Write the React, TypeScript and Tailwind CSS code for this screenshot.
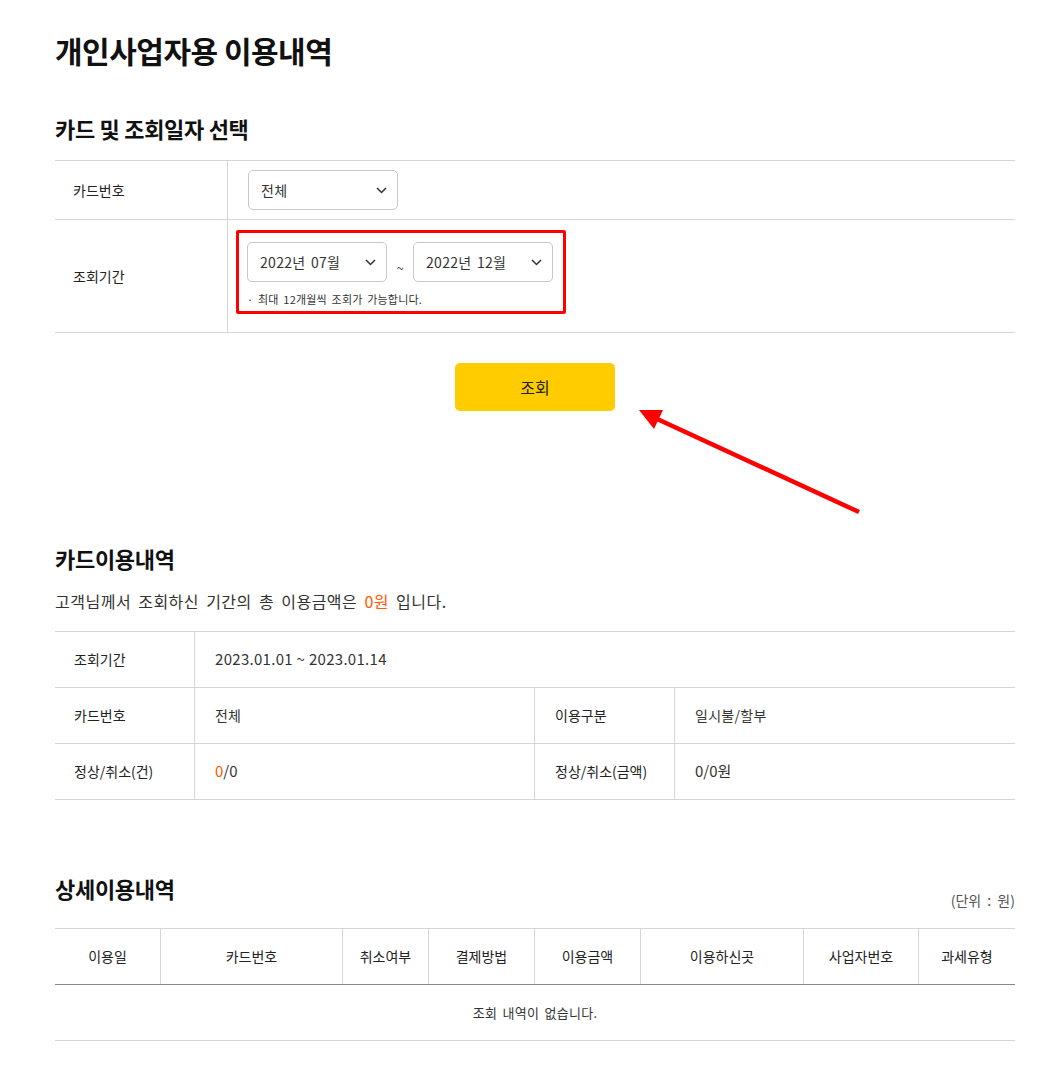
import React from "react";

const font = { fontFamily: '"Noto Sans CJK KR", "Noto Sans", sans-serif' };

function Chevron() {
  return (
    <svg width="11" height="7" viewBox="0 0 11 7" fill="none">
      <path d="M1 1l4.5 4.5L10 1" stroke="#333" strokeWidth="1.5" />
    </svg>
  );
}

function SelectBox({ value, width }: { value: string; width: string }) {
  return (
    <div
      className={`${width} h-[40px] flex items-center justify-between pl-[12px] pr-[10px] border border-[#c8c8c8] rounded-[5px] bg-white text-[14px] text-[#333] tracking-[0.3px] [word-spacing:2px]`}
    >
      <span>{value}</span>
      <Chevron />
    </div>
  );
}

const detailColumns = [
  { label: "이용일", w: "w-[106px]" },
  { label: "카드번호", w: "w-[182px]" },
  { label: "취소여부", w: "w-[86px]" },
  { label: "결제방법", w: "w-[106px]" },
  { label: "이용금액", w: "w-[106px]" },
  { label: "이용하신곳", w: "w-[163px]" },
  { label: "사업자번호", w: "w-[115px]" },
  { label: "과세유형", w: "flex-1" },
];

export default function App() {
  return (
    <div className="relative min-h-[1073px] bg-white text-[#222]" style={font}>
      <div className="w-[960px] ml-[55px] pt-[30px] pb-[40px]">
        {/* page title */}
        <h1 className="text-[30px] leading-[40px] font-bold text-[#111] tracking-[-0.5px]">
          개인사업자용 이용내역
        </h1>

        {/* card & period selection */}
        <h2 className="mt-[43px] text-[22px] leading-[30px] font-semibold text-[#111] tracking-[-0.3px]">
          카드 및 조회일자 선택
        </h2>

        <div className="mt-[17px] border-t border-[#d5d5d5]">
          <div className="flex h-[59px] border-b border-[#d5d5d5]">
            <div className="w-[173px] flex items-center pl-[18px] text-[14px] border-r border-[#d5d5d5]">
              카드번호
            </div>
            <div className="flex-1 flex items-center pl-[20px]">
              <SelectBox value="전체" width="w-[150px]" />
            </div>
          </div>
          <div className="flex h-[113px] border-b border-[#d5d5d5]">
            <div className="w-[173px] flex items-center pl-[18px] text-[14px] border-r border-[#d5d5d5]">
              조회기간
            </div>
            <div className="flex-1 pl-[8px] pt-[10px]">
              <div className="w-[330px] border-[3px] border-[#ff0000] rounded-[2px] pl-[8px] pt-[9px] pb-[4px]">
                <div className="flex items-center">
                  <SelectBox value="2022년 07월" width="w-[140px]" />
                  <span className="w-[26px] text-center text-[13px] text-[#555] pt-[12px]">~</span>
                  <SelectBox value="2022년 12월" width="w-[140px]" />
                </div>
                <p className="mt-[9px] text-[11px] leading-[16px] text-[#333] tracking-[0.2px] [word-spacing:2px]">
                  · 최대 12개월씩 조회가 가능합니다.
                </p>
              </div>
            </div>
          </div>
        </div>

        <div className="mt-[30px] flex justify-center">
          <button className="w-[160px] h-[48px] rounded-[5px] bg-[#ffcc00] text-[16px] text-[#222]">
            조회
          </button>
        </div>

        {/* card usage summary */}
        <h2 className="mt-[132px] text-[22px] leading-[30px] font-semibold text-[#111] tracking-[-0.3px]">
          카드이용내역
        </h2>
        <p className="mt-[16px] text-[16px] leading-[24px] text-[#333] tracking-[0.5px] [word-spacing:3px]">
          고객님께서 조회하신 기간의 총 이용금액은 <span className="text-[#ff5a00]">0원</span> 입니다.
        </p>

        <div className="mt-[18px] border-t border-[#d5d5d5] text-[14px]">
          <div className="flex h-[56px] border-b border-[#d5d5d5]">
            <div className="w-[140px] flex items-center pl-[19px] border-r border-[#d5d5d5]">조회기간</div>
            <div className="flex-1 flex items-center pl-[20px] text-[#333] text-[15px] tracking-[0.3px]">
              2023.01.01 ~ 2023.01.14
            </div>
          </div>
          <div className="flex h-[56px] border-b border-[#d5d5d5]">
            <div className="w-[140px] flex items-center pl-[19px] border-r border-[#d5d5d5]">카드번호</div>
            <div className="w-[340px] flex items-center pl-[20px] border-r border-[#d5d5d5] text-[#333]">전체</div>
            <div className="w-[140px] flex items-center pl-[20px] border-r border-[#d5d5d5]">이용구분</div>
            <div className="flex-1 flex items-center pl-[20px] text-[#333] tracking-[0.3px]">일시불/할부</div>
          </div>
          <div className="flex h-[56px] border-b border-[#d5d5d5]">
            <div className="w-[140px] flex items-center pl-[19px] border-r border-[#d5d5d5]">정상/취소(건)</div>
            <div className="w-[340px] flex items-center pl-[20px] border-r border-[#d5d5d5] text-[#333] text-[15px]">
              <span className="text-[#ff5a00]">0</span>/0
            </div>
            <div className="w-[140px] flex items-center pl-[20px] border-r border-[#d5d5d5]">정상/취소(금액)</div>
            <div className="flex-1 flex items-center pl-[20px] text-[#333] text-[15px]">0/0원</div>
          </div>
        </div>

        {/* detail list */}
        <div className="mt-[73px] flex items-end justify-between">
          <h2 className="pb-[7px] text-[22px] leading-[30px] font-semibold text-[#111] tracking-[-0.3px]">
            상세이용내역
          </h2>
          <span className="text-[14px] leading-[20px] text-[#555] [word-spacing:3px]">(단위 : 원)</span>
        </div>

        <div className="mt-[18px] border-t border-[#d5d5d5]">
          <div className="flex h-[56px] border-b border-[#888]">
            {detailColumns.map((col, i) => (
              <div
                key={col.label}
                className={`${col.w} flex items-center justify-center text-[14px] ${
                  i < detailColumns.length - 1 ? "border-r border-[#d5d5d5]" : ""
                }`}
              >
                {col.label}
              </div>
            ))}
          </div>
          <div className="h-[56px] flex items-center justify-center text-[13px] text-[#333] tracking-[0.3px] [word-spacing:2px] border-b border-[#d5d5d5]">
            조회 내역이 없습니다.
          </div>
        </div>
      </div>

      {/* annotation arrow */}
      <svg className="absolute left-0 top-0 pointer-events-none" width="1062" height="1073">
        <line x1="859" y1="512" x2="655" y2="418" stroke="#ff0000" strokeWidth="4.5" />
        <polygon points="639,410 663,410 654,429" fill="#ff0000" />
      </svg>
    </div>
  );
}
